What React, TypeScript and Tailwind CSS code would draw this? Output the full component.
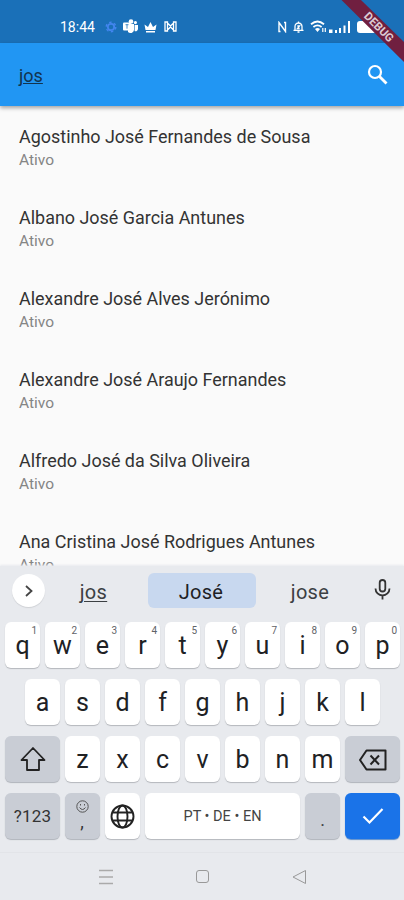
import React from 'react';

const people = [
  'Agostinho José Fernandes de Sousa',
  'Albano José Garcia Antunes',
  'Alexandre José Alves Jerónimo',
  'Alexandre José Araujo Fernandes',
  'Alfredo José da Silva Oliveira',
  'Ana Cristina José Rodrigues Antunes',
];

const topRow = ['q', 'w', 'e', 'r', 't', 'y', 'u', 'i', 'o', 'p'];
const homeRow = ['a', 's', 'd', 'f', 'g', 'h', 'j', 'k', 'l'];
const bottomRow = ['z', 'x', 'c', 'v', 'b', 'n', 'm'];

const Key: React.FC<{ label: string; hint?: string }> = ({ label, hint }) => (
  <div className="relative flex h-[46px] w-[35px] items-center justify-center rounded-[6px] bg-white text-[25px] leading-none text-[#202124] shadow-[0_1px_1px_#b4b7bc]">
    <span>{label}</span>
    {hint && <span className="absolute top-[4px] right-[3px] text-[10px] leading-none text-[#5f6368]">{hint}</span>}
  </div>
);

const StatusBar: React.FC = () => (
  <div className="flex h-[43px] items-center bg-[#1a70b8] pt-[10px] pl-[60px] text-white">
    <span className="w-[36px] shrink-0 text-[14px] leading-none">18:44</span>
    <svg className="ml-[9px] shrink-0" width="12" height="12" viewBox="0 0 12 12" fill="none" stroke="#4285ee">
      <circle cx="6" cy="6" r="3.2" strokeWidth="1.8" />
      <circle cx="6" cy="6" r="4.8" strokeWidth="1.4" strokeDasharray="2.5 2.53" />
    </svg>
    {/* Teams */}
    <svg className="ml-[6px] shrink-0" width="15" height="15" viewBox="0 0 15 15" fill="white">
      <circle cx="8" cy="2.5" r="2.3" />
      <circle cx="12.4" cy="3.6" r="1.6" />
      <path d="M5 5h6v6a3.5 3.5 0 0 1-6 2zM11.6 6H15v4a2.4 2.4 0 0 1-3.4 2z" />
      <rect y="3.5" width="8" height="8" rx="1" />
      <path d="M2.5 5.7h3M4 5.7v4" stroke="#1a70b8" strokeWidth="0.8" />
    </svg>
    <svg className="ml-[6px] shrink-0" width="13" height="12" viewBox="0 0 13 12" fill="white">
      <path d="M0.5 3.5l3.5 2.5 2.5-5L9 6l3.500-2.500L11.5 9h-10zM2 10h9v1.5H2z" />
    </svg>
    <svg className="ml-[7px] shrink-0" width="13" height="11" viewBox="0 0 13 11" fill="none" stroke="white" strokeWidth="1.3">
      <path d="M1 1v9h2.5V1zM9.5 1v9H12V1zM4 2.5l2.5 2.5L9 2.5M4 8.500L6.5 6 9 8.500" />
    </svg>

    <svg className="ml-[101px] shrink-0" width="10" height="12" viewBox="0 0 10 12" fill="none" stroke="white" strokeWidth="1.4">
      <path d="M2.5 10.500H1v-9l6.5 9V1.500H6" />
    </svg>
    <svg className="ml-[5px] shrink-0" width="11" height="12" viewBox="0 0 11 12" fill="none" stroke="white" strokeWidth="1.3">
      <path d="M0.5 9.3h10M2 9V5.500a3.5 3.5 0 0 1 7 0V9M5.5 0.500v1.5M4.5 11h2M4.3 5h2.2l-2 2.5h2.2" />
    </svg>
    <svg className="ml-[6px] shrink-0" width="18" height="13" viewBox="0 0 18 13" fill="none" stroke="white" strokeWidth="1.8">
      <path d="M1 4.2q6.5-5.5 13 0M3.4 7q4.1-3.3 8.2 0" />
      <path d="M5 9q2.5-1.8 5 0l-2.5 3z" fill="white" stroke="none" />
      <path d="M12.8 8v4M15.3 8v4" strokeWidth="1.2" />
    </svg>
    <svg className="ml-[1px] shrink-0" width="22" height="12" viewBox="0 0 22 12" fill="white">
      <path d="M0 8.500h3.500V12H0zM6 9h2v3H6zM10 7h2v5h-2zM14.5 4.500h2v7.500h-2zM19 0h2v12h-2z" />
    </svg>
    <div className="ml-[6px] h-[12px] w-[19px] shrink-0 rounded-[3px] bg-white" />
    <div className="h-[5px] w-[2px] shrink-0 rounded-r-[1px] bg-white" />
  </div>
);

const DebugBanner: React.FC = () => (
  <svg className="absolute top-0 right-0" width="64" height="64" viewBox="0 0 64 64">
    <path d="M1.5 0H21L64 42V62z" fill="#701f40" />
    <text x="39" y="31" transform="rotate(45 39 27)" textAnchor="middle" className="fill-[#dccbd3] font-['Roboto'] text-[11.5px] font-bold">
      DEBUG
    </text>
  </svg>
);

const Keyboard: React.FC = () => (
  <div className="relative flex h-[334px] flex-col bg-[#e8eaee] shadow-[0_-1px_2px_#e8eaee]">
    <div className="flex h-[56px] items-start pt-[7px] pl-[12px] text-[20px] text-[#3c4043]">
      <div className="mt-[1px] flex size-[33px] items-center justify-center rounded-full bg-white shadow-[0_1px_1px_#cfd1d5]">
        <svg width="10" height="14" viewBox="0 0 10 14" fill="none" stroke="#444" strokeWidth="1.8">
          <path d="M2 2l5.5 5L2 12" />
        </svg>
      </div>
      <div className="flex h-[38px] w-[103px] items-center justify-center pr-[6px] tracking-[0.3px] underline decoration-1 underline-offset-2">jos</div>
      <div className="flex h-[35px] w-[108px] items-center justify-center rounded-[6px] bg-[#c8d8ef] pt-[3px] pr-[2px] tracking-[0.3px] text-[#202124]">José</div>
      <div className="flex h-[38px] w-[108px] items-center justify-center tracking-[0.3px]">jose</div>
      <svg className="mt-[5px] ml-[10px]" width="17" height="23" viewBox="0 0 17 23" fill="none" stroke="#333" strokeWidth="1.8">
        <rect x="5.7" y="2" width="5.6" height="11.5" rx="2.8" />
        <path d="M1.5 10.500a7 7 0 0 0 14 0M8.5 17.500v4" />
      </svg>
    </div>

    <div className="flex flex-col gap-[11px] pr-[4px] pl-[5px]">
      <div className="flex justify-between">
        {topRow.map((key, index) => (
          <Key key={key} label={key} hint={String((index + 1) % 10)} />
        ))}
      </div>
      <div className="flex justify-between px-[20px]">
        {homeRow.map((key) => (
          <Key key={key} label={key} />
        ))}
      </div>
      <div className="flex justify-between">
        <div className="flex h-[46px] w-[55px] items-center justify-center rounded-[6px] bg-[#c9cdd5] shadow-[0_1px_1px_#b0b4bb]">
          <svg width="26" height="26" viewBox="0 0 26 26" fill="none" stroke="#222" strokeWidth="1.8" strokeLinejoin="round">
            <path d="M13 2L1.5 14h5.5v10h12V14h5.500z" />
          </svg>
        </div>
        {bottomRow.map((key) => (
          <Key key={key} label={key} />
        ))}
        <div className="flex h-[46px] w-[55px] items-center justify-center rounded-[6px] bg-[#c9cdd5] pt-[2px] shadow-[0_1px_1px_#b0b4bb]">
          <svg width="28" height="22" viewBox="0 0 28 22" fill="none" stroke="#222" strokeWidth="2" strokeLinejoin="round">
            <path d="M7.5 1.500h19v19h-19L1 11z" />
            <path d="M11.5 6.500l8.500 9M20 6.500l-8.500 9" />
          </svg>
        </div>
      </div>
      <div className="flex justify-between">
        <div className="flex h-[46px] w-[55px] items-center justify-center rounded-[6px] bg-[#c9cdd5] pt-[1px] text-[17px] tracking-[0.2px] text-[#333] shadow-[0_1px_1px_#b0b4bb]">?123</div>
        <div className="flex h-[46px] w-[35px] flex-col items-center rounded-[6px] bg-[#c9cdd5] pt-[7px] pr-[1px] text-[18px] leading-none text-[#333] shadow-[0_1px_1px_#b0b4bb]">
          <svg width="13" height="13" viewBox="0 0 13 13" fill="none" stroke="#555">
            <circle cx="6.5" cy="6.5" r="5.7" />
            <path d="M3.5 7.500q3 4 6 0M4.5 4v1.5M8.5 4v1.5" />
          </svg>
          <span>,</span>
        </div>
        <div className="flex h-[46px] w-[35px] items-center justify-center rounded-[6px] bg-white shadow-[0_1px_1px_#b4b7bc]">
          <svg width="25" height="25" viewBox="0 0 25 25" fill="none" stroke="#222" strokeWidth="1.9">
            <circle cx="12.5" cy="12.5" r="11" />
            <ellipse cx="12.5" cy="12.5" rx="5" ry="11" />
            <path d="M2.5 8.500h20M2.5 16.500h20" />
          </svg>
        </div>
        <div className="flex h-[46px] w-[155px] items-center justify-center rounded-[6px] bg-white pt-[1px] text-[14.5px] text-[#444] shadow-[0_1px_1px_#b4b7bc]">PT • DE • EN</div>
        <div className="flex h-[46px] w-[35px] items-center justify-center rounded-[6px] bg-[#c9cdd5] pt-[6px] text-[18px] text-[#444] shadow-[0_1px_1px_#b0b4bb]">.</div>
        <div className="flex h-[46px] w-[55px] items-center justify-center rounded-[6px] bg-[#1a73e8] shadow-[0_1px_1px_#5e8fcc]">
          <svg width="22" height="18" viewBox="0 0 22 18" fill="none" stroke="white" strokeWidth="2.2">
            <path d="M1.5 9.500l6 6L20.5 2" />
          </svg>
        </div>
      </div>
    </div>

    {/* System navigation */}
    <div className="mt-auto flex h-[48px] items-center border-t border-[#e2e4e8] pl-[98px]">
      <svg width="16" height="16" viewBox="0 0 16 16" stroke="#aaa" strokeWidth="1.3">
        <path d="M1 1.500h14M1 8h14M1 14.500h14" />
      </svg>
      <div className="ml-[82px] size-[13px] rounded-[3px] border border-[#999]" />
      <svg className="ml-[83px]" width="16" height="16" viewBox="0 0 16 16" fill="none" stroke="#999" strokeLinejoin="round">
        <path d="M1 8l12.500-6.500v13z" />
      </svg>
    </div>
  </div>
);

const App: React.FC = () => {
  return (
    <div className="relative flex h-[900px] w-[404px] flex-col overflow-hidden bg-[#fafafa] font-['Roboto',sans-serif]">
      <StatusBar />
      <div className="relative flex h-[63px] items-center justify-between bg-[#2196f3] pr-[16px] pl-[19px] shadow-[0_2px_4px_rgba(0,0,0,0.35)]">
        <span className="pt-[1px] text-[18px] text-[#12344f] underline decoration-1 underline-offset-1">jos</span>
        <svg width="21" height="21" viewBox="0 0 21 21" fill="none" stroke="white" strokeWidth="2.2">
          <circle cx="8" cy="8" r="6" />
          <path d="M12.5 12.500l7 7" strokeWidth="2.8" />
        </svg>
      </div>

      <div className="flex-1 overflow-hidden pt-[18px]">
        {people.map((name) => (
          <div key={name} className="h-[81px] pl-[19px] whitespace-nowrap">
            <div className="text-[17.95px] leading-[25px] text-[#333]">{name}</div>
            <div className="text-[15.5px] leading-[23px] text-[#858585]">Ativo</div>
          </div>
        ))}
      </div>

      <Keyboard />
      <DebugBanner />
    </div>
  );
};

export default App;
